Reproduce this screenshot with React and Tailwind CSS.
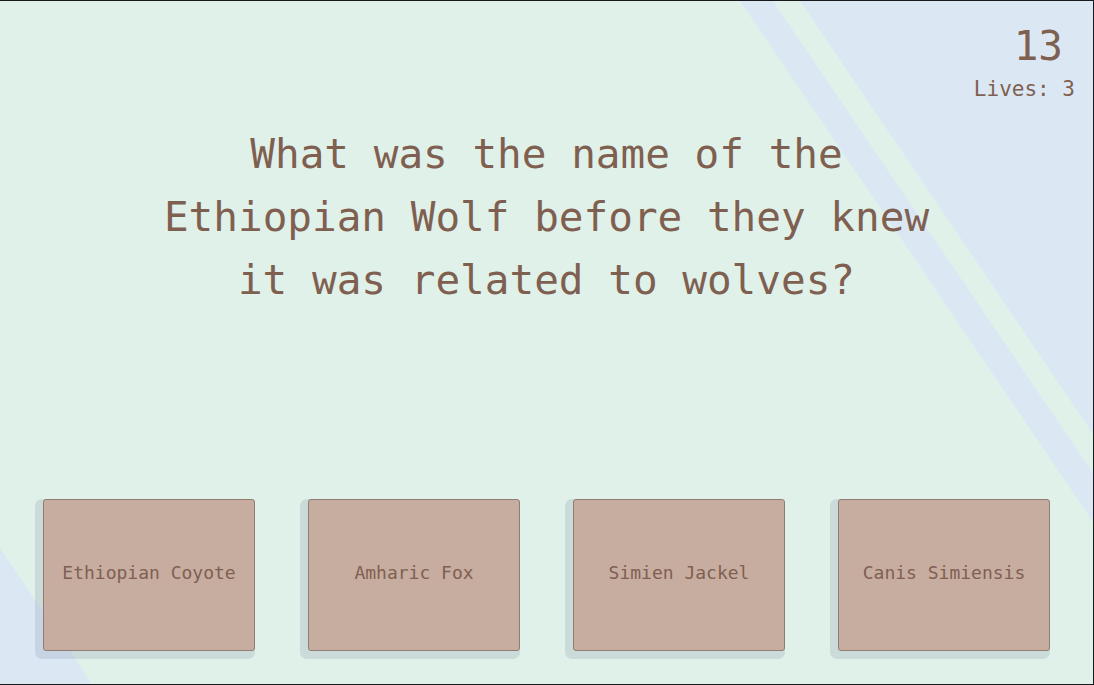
const answers = ["Ethiopian Coyote", "Amharic Fox", "Simien Jackel", "Canis Simiensis"];

function Backdrop() {
  return (
    <svg
      aria-hidden="true"
      className="absolute inset-0 h-full w-full"
      viewBox="0 0 1093 683"
      preserveAspectRatio="none"
    >
      <g fill="#dbe8f4">
        <path d="M740 0H773L1093 472V521Z" />
        <path d="M800 0H1093V433Z" />
        <path d="M0 547L92 683H0Z" />
      </g>
    </svg>
  );
}

function AnswerCard({ label }) {
  return (
    <button
      type="button"
      className="h-[152px] cursor-pointer rounded-[3px] border border-[#8f7d73] bg-[#c7ada0] px-2 pb-1 text-[18px] leading-6 shadow-[-4px_4px_0_4px_rgba(114,136,158,0.2)]"
    >
      {label}
    </button>
  );
}

export default function App() {
  return (
    <div className="relative flex min-h-screen flex-col border-y border-r border-[#17191c] bg-[#e0f1e9] font-['DejaVu_Sans_Mono',monospace] text-[#7f6050]">
      <Backdrop />
      <header className="relative flex flex-col items-end gap-[3px] px-[18px] pt-[21px]">
        <p className="px-3 text-[41px] leading-[48px]">13</p>
        <p className="text-[21px] leading-8">Lives: 3</p>
      </header>
      <main className="relative flex flex-1 flex-col justify-between pt-[18px] pb-[33px]">
        <h1 className="mx-auto max-w-[800px] text-center text-[41px] leading-[63px]">
          What was the name of the Ethiopian Wolf before they knew it was related to wolves?
        </h1>
        <div className="grid grid-cols-4 gap-[53px] px-[43px]">
          {answers.map((label) => (
            <AnswerCard key={label} label={label} />
          ))}
        </div>
      </main>
    </div>
  );
}
